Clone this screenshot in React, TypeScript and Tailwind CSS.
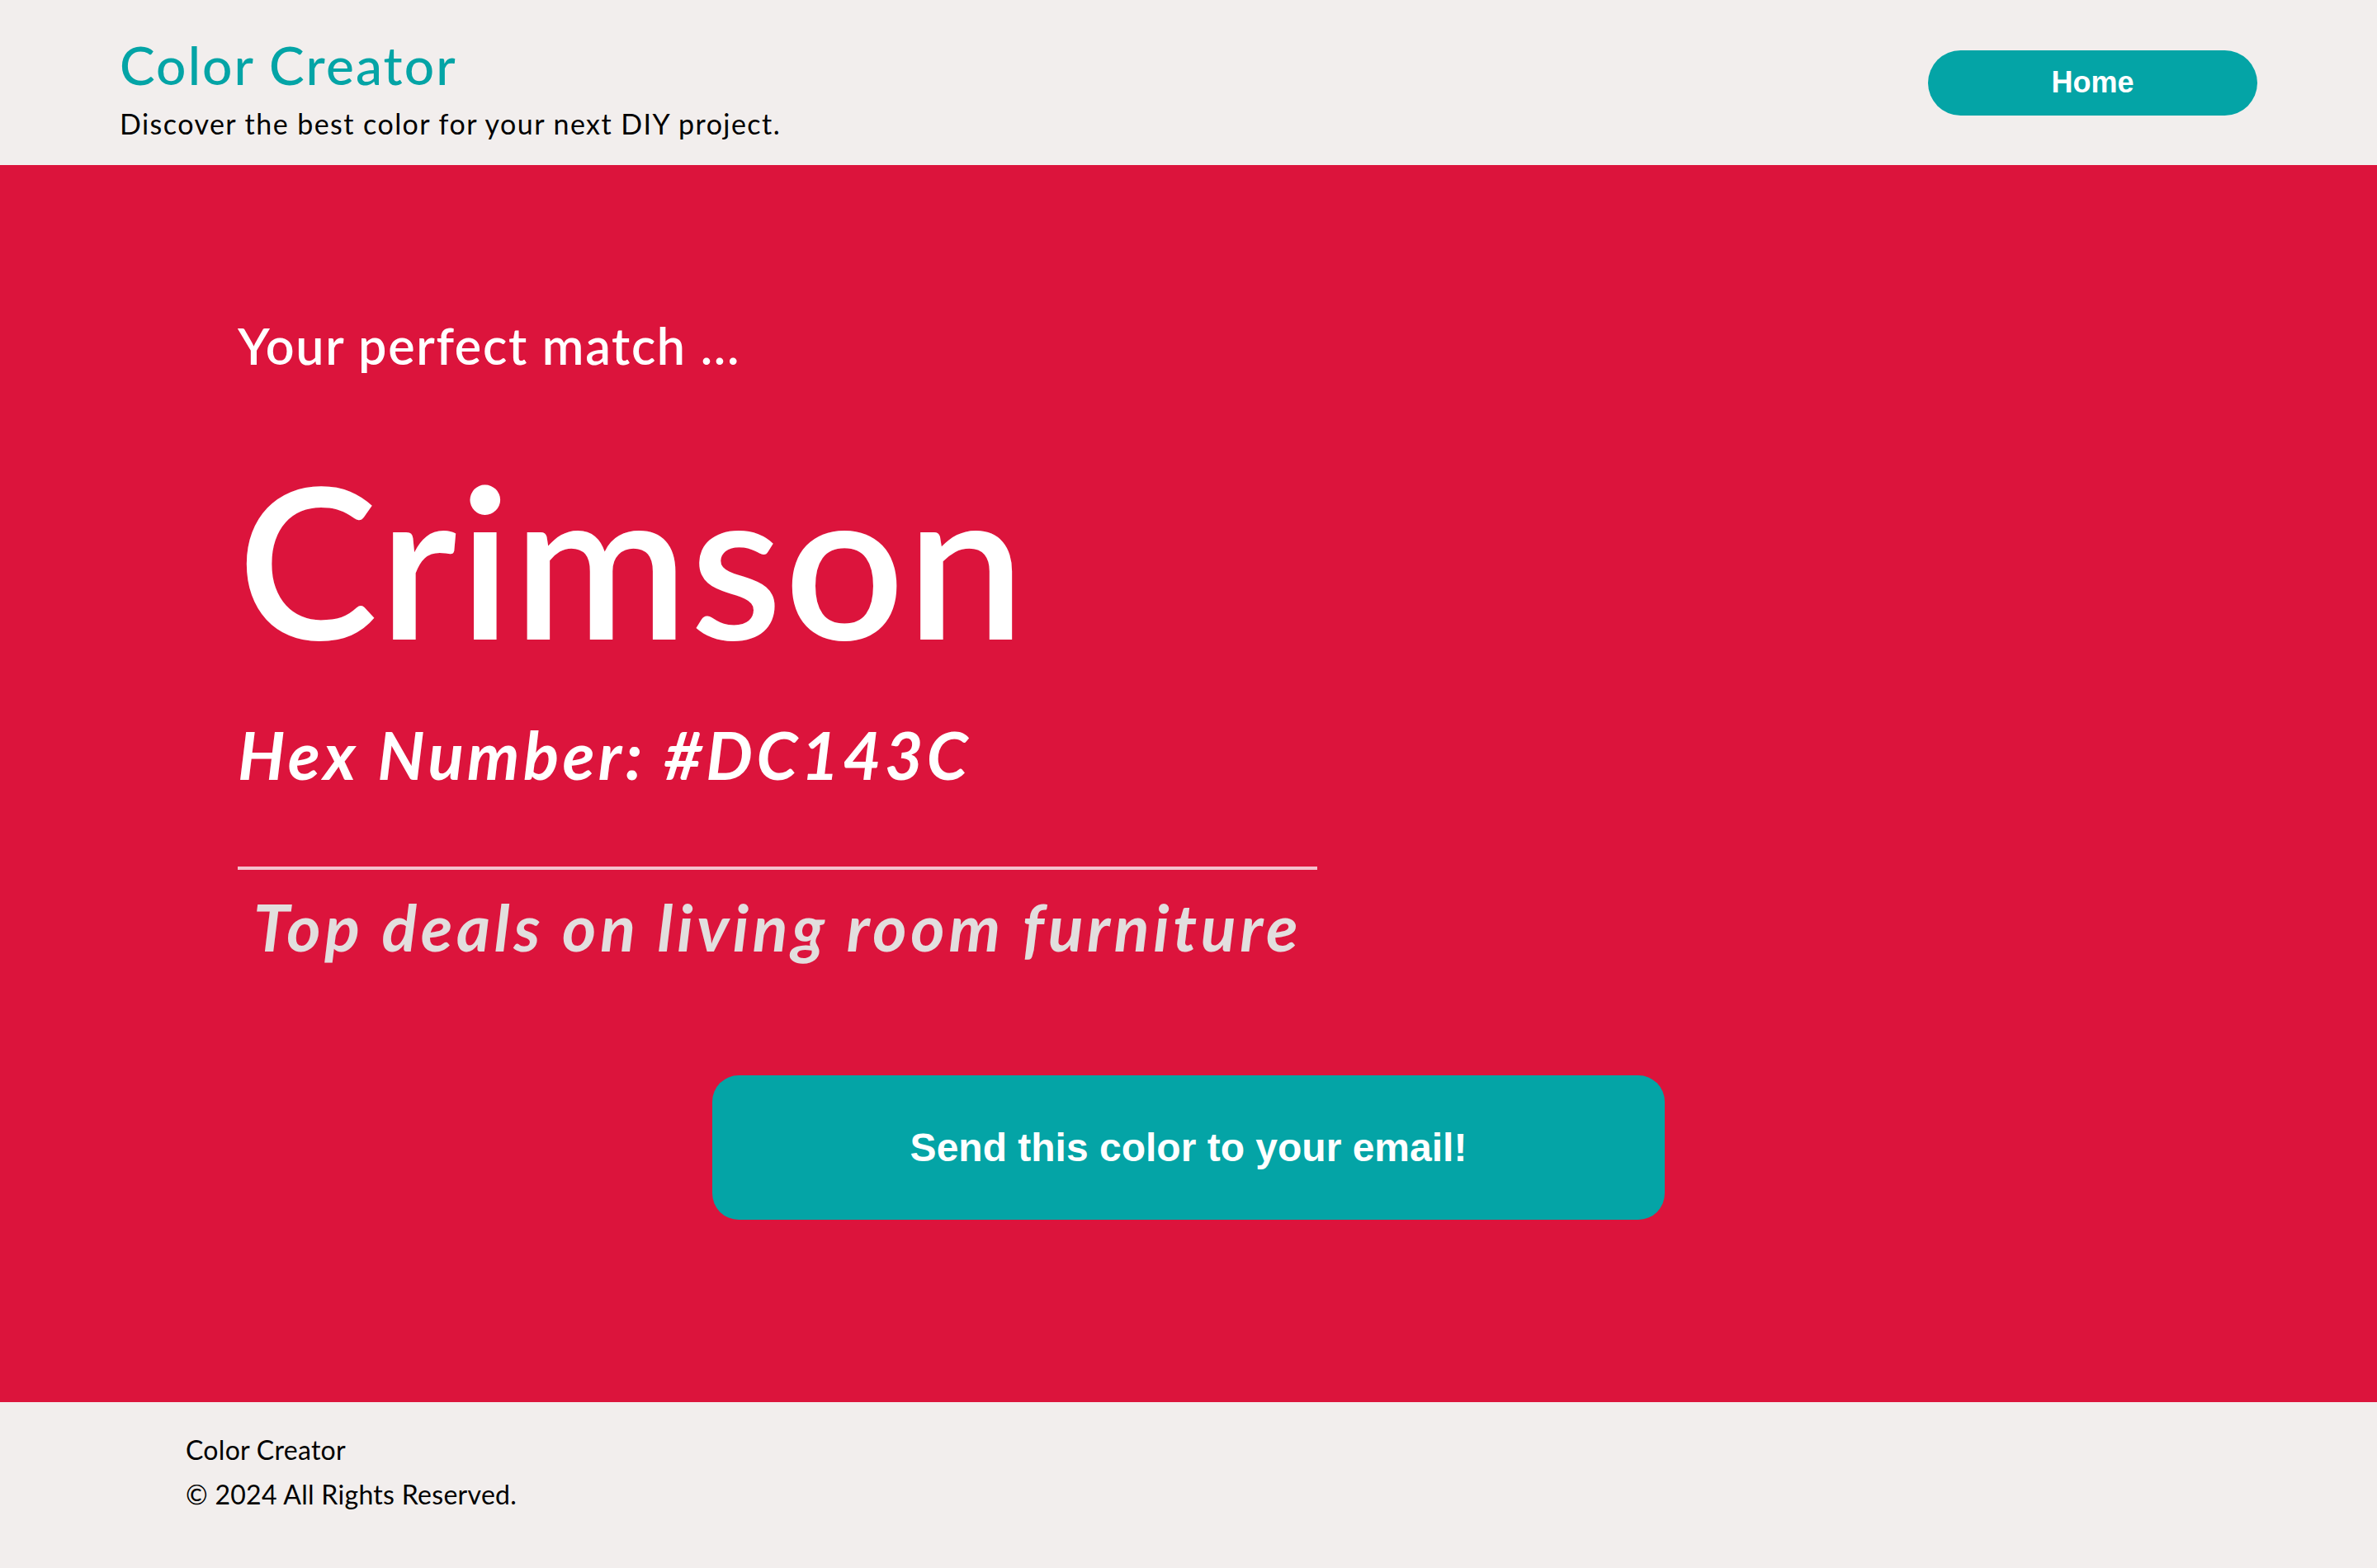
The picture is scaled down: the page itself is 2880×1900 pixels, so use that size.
import React from "react";

export default function App() {
  return (
    <div className="w-[2880px] h-[1900px] flex flex-col font-['Lato',sans-serif]">
      <header className="h-[200px] shrink-0 bg-[#f2eeed] px-[145px] flex items-center justify-between">
        <div className="pt-[14px] flex flex-col">
          <h1 className="text-[64px] leading-[64px] font-medium tracking-[2.1px] text-[#04a4a6]">Color Creator</h1>
          <p className="mt-[22px] text-[34px] leading-[34px] tracking-[1.45px] text-black">
            Discover the best color for your next DIY project.
          </p>
        </div>
        <button className="w-[399px] h-[79px] rounded-full bg-[#04a4a6] text-white text-[36px] font-bold font-['Liberation_Sans',Arial,sans-serif]">
          Home
        </button>
      </header>

      <main className="h-[1499px] shrink-0 bg-[#DC143C] pt-[188px] flex flex-col">
        <div className="pl-[288px] flex flex-col items-start">
          <h2 className="text-[61px] leading-none font-semibold tracking-[1.7px] text-white">Your perfect match ...</h2>
          <h3 className="mt-[100px] text-[255px] leading-none font-semibold tracking-[2.6px] text-white">Crimson</h3>
          <p className="mt-[70px] text-[80px] leading-none font-bold italic tracking-[4.4px] text-white">
            Hex Number: #DC143C
          </p>
          <div className="w-[1308px] mt-[96px] flex flex-col">
            <div className="h-[4px] bg-[#f5c1cd]" />
            <p className="mt-[29px] text-[79px] leading-none font-bold italic tracking-[4.7px] text-[#e2dede] text-center">
              Top deals on living room furniture
            </p>
          </div>
        </div>
        <div className="mt-[141px] flex justify-center">
          <button className="w-[1154px] h-[175px] rounded-[32px] bg-[#04a4a6] text-white text-[48px] font-bold font-['Liberation_Sans',Arial,sans-serif]">
            Send this color to your email!
          </button>
        </div>
      </main>

      <footer className="h-[201px] shrink-0 bg-[#f2eeed] pl-[225px] pt-[31px] flex flex-col">
        <p className="text-[32px] leading-[54px] tracking-[0.3px] text-black">Color Creator</p>
        <p className="text-[32px] leading-[54px] tracking-[0.3px] text-black">© 2024 All Rights Reserved.</p>
      </footer>
    </div>
  );
}
